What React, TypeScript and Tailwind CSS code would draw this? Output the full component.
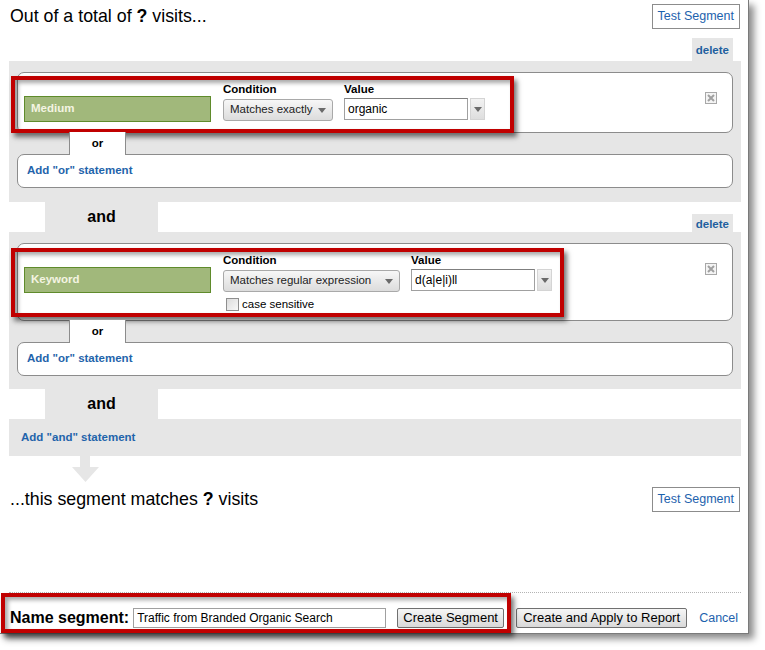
import React from 'react'

// Advanced segment editor: two AND-ed conditions, each with an "or" slot,
// plus the name/create footer. Red boxes are annotation overlays.

function Caret() {
  return (
    <svg width="8" height="5" viewBox="0 0 8 5" className="shrink-0">
      <path d="M0 0h8L4 5z" fill="#6a6a6a" />
    </svg>
  )
}

function CloseBox() {
  return (
    <svg width="12" height="12" viewBox="0 0 12 12">
      <rect x="0.5" y="0.5" width="11" height="11" fill="#f4f4f4" stroke="#a8a8a8" />
      <path d="M3 3l6 6M9 3l-6 6" stroke="#a0a0a0" strokeWidth="2" />
    </svg>
  )
}

function DeleteTab({ tall }: { tall?: boolean }) {
  return (
    <div
      className={
        'mr-[15px] flex bg-[#e6e6e6] px-[4px] text-[11.5px] font-bold leading-[14px] text-[#1f5f9f] ' +
        (tall ? 'h-[23px] items-center' : 'h-[18px] items-end pb-[1px]')
      }
    >
      delete
    </div>
  )
}

function AndTab() {
  return (
    <div className="ml-[45px] flex h-[30px] w-[113px] items-center justify-center bg-[#e6e6e6] text-[16px] font-bold">
      and
    </div>
  )
}

function OrBlock() {
  return (
    <>
      <div className="relative z-10 -my-px ml-[52px] flex h-[23px] w-[57px] items-center justify-center border-x border-[#8c8c8c] bg-white text-[11.5px] font-bold">
        or
      </div>
      <div className="flex h-[34px] items-center rounded-[7px] border border-[#8c8c8c] bg-white pl-[9px] text-[11.5px] font-bold text-[#1f64ab]">
        Add "or" statement
      </div>
    </>
  )
}

function Rule({
  dimension,
  condition,
  condWidth,
  value,
  caseSensitive,
  height,
}: {
  dimension: string
  condition: string
  condWidth: string
  value: string
  caseSensitive?: boolean
  height: string
}) {
  return (
    <div className={'flex items-start rounded-[7px] border border-[#8c8c8c] bg-white pl-[6px] ' + height}>
      <div className="mt-[23px] flex h-[26px] w-[187px] items-center border border-[#5f8b2b] bg-[#a1b87b] pl-[6px] text-[11.5px] font-bold text-[#f4f4e2]">
        {dimension}
      </div>
      <div className="ml-[12px] mt-[9px] flex flex-col">
        <span className="text-[11.5px] font-bold leading-[14px]">Condition</span>
        <div
          className={
            'mt-[3px] flex h-[22px] items-center justify-between rounded-[3px] border border-[#a9a9a9] bg-gradient-to-b from-[#f7f7f7] to-[#dcdcdc] pl-[6px] pr-[6px] text-[11.5px] text-[#222] ' +
            condWidth
          }
        >
          <span>{condition}</span>
          <Caret />
        </div>
        {caseSensitive && (
          <label className="ml-[3px] mt-[6px] flex items-center gap-[3px] text-[11.5px] leading-[13px]">
            <span className="h-[13px] w-[13px] border border-[#8e8e8e] bg-gradient-to-br from-[#dcdcdc] to-[#f8f8f8]" />
            case sensitive
          </label>
        )}
      </div>
      <div className="ml-[11px] mt-[9px] flex flex-col">
        <span className="text-[11.5px] font-bold leading-[14px]">Value</span>
        <div className="mt-[2px] flex items-start">
          <div className="flex h-[22px] w-[124px] items-center border border-[#a0a0a0] border-t-[#7f7f7f] bg-white pl-[3px] text-[12px]">
            {value}
          </div>
          <div className="ml-[2px] flex h-[22px] w-[15px] items-center justify-center border border-[#d4d4d4] bg-gradient-to-b from-[#f2f2f2] to-[#dedede]">
            <Caret />
          </div>
        </div>
      </div>
      <div className="ml-auto mr-[15px] mt-[19px]">
        <CloseBox />
      </div>
    </div>
  )
}

function Highlight({ className }: { className: string }) {
  return (
    <div
      className={
        'pointer-events-none absolute border-[4px] border-[#c00000] shadow-[3px_4px_5px_rgba(0,0,0,0.55),inset_3px_3px_4px_rgba(0,0,0,0.35)] ' +
        className
      }
    />
  )
}

function TestButton() {
  return (
    <button
      type="button"
      className="h-[25px] border border-[#8c8c8c] bg-white px-[5px] text-[12.5px] text-[#1d62ad]"
    >
      Test Segment
    </button>
  )
}

export default function App() {
  return (
    <div className="h-[650px] w-[765px] bg-white font-['Liberation_Sans',Arial,sans-serif] text-black">
      <div className="relative flex h-[634px] w-[749px] flex-col border-b border-r border-[#7a7a7a] bg-white shadow-[5px_5px_7px_rgba(0,0,0,0.45)]">
        <div className="flex items-start justify-between pl-[10px] pr-[8px] pt-[4px]">
          <h1 className="mt-[1px] text-[17.8px] leading-[22px]">
            Out of a total of <b>?</b> visits...
          </h1>
          <TestButton />
        </div>

        <div className="mt-[9px] flex justify-end">
          <DeleteTab tall />
        </div>
        <div className="ml-[9px] mr-[7px] bg-[#e6e6e6] px-[8px] pb-[14px] pt-[11px]">
          <Rule
            dimension="Medium"
            condition="Matches exactly"
            condWidth="w-[110px]"
            value="organic"
            height="h-[61px]"
          />
          <OrBlock />
        </div>

        <div className="flex h-[30px] items-end justify-between">
          <AndTab />
          <DeleteTab />
        </div>
        <div className="ml-[9px] mr-[7px] bg-[#e6e6e6] px-[8px] pb-[13px] pt-[11px]">
          <Rule
            dimension="Keyword"
            condition="Matches regular expression"
            condWidth="w-[177px]"
            value="d(a|e|i)ll"
            caseSensitive
            height="h-[78px]"
          />
          <OrBlock />
        </div>

        <AndTab />
        <div className="ml-[9px] mr-[7px] flex h-[37px] items-center bg-[#e6e6e6] pl-[12px] text-[11.5px] font-bold text-[#1f64ab]">
          Add "and" statement
        </div>
        <svg width="27" height="26" viewBox="0 0 27 26" className="ml-[72px]">
          <path d="M8 0h10v11h9L13.5 26 0 11h8z" fill="#e6e6e6" />
        </svg>

        <div className="mt-[5px] flex items-start justify-between pl-[10px] pr-[8px]">
          <p className="mt-[1px] text-[17.8px] leading-[22px]">
            ...this segment matches <b>?</b> visits
          </p>
          <TestButton />
        </div>

        <div className="flex-1" />
        <div className="ml-[9px] mr-[7px] border-t border-dotted border-[#b4b4b4]" />
        <div className="mb-[5px] mt-[15px] flex h-[20px] items-center pl-[10px]">
          <span className="text-[16px] font-bold leading-[20px]">Name segment:</span>
          <div className="ml-[4px] flex h-[20px] w-[253px] items-center border border-[#a0a0a0] bg-white pl-[3px] text-[12px]">
            Traffic from Branded Organic Search
          </div>
          <button
            type="button"
            className="ml-[11px] h-[20px] w-[107px] rounded-[2px] border border-[#707070] bg-gradient-to-b from-[#f6f6f6] to-[#d9d9d9] text-[13px] leading-[18px]"
          >
            Create Segment
          </button>
          <button
            type="button"
            className="ml-[12px] h-[20px] w-[171px] rounded-[2px] border border-[#707070] bg-gradient-to-b from-[#f6f6f6] to-[#d9d9d9] text-[13px] leading-[18px]"
          >
            Create and Apply to Report
          </button>
          <span className="ml-[12px] text-[12.5px] text-[#1d62ad]">Cancel</span>
        </div>

        <Highlight className="left-[11px] top-[76px] h-[57px] w-[503px]" />
        <Highlight className="left-[11px] top-[248px] h-[69px] w-[553px]" />
        <Highlight className="left-[1px] top-[593px] h-[40px] w-[510px]" />
      </div>
    </div>
  )
}
